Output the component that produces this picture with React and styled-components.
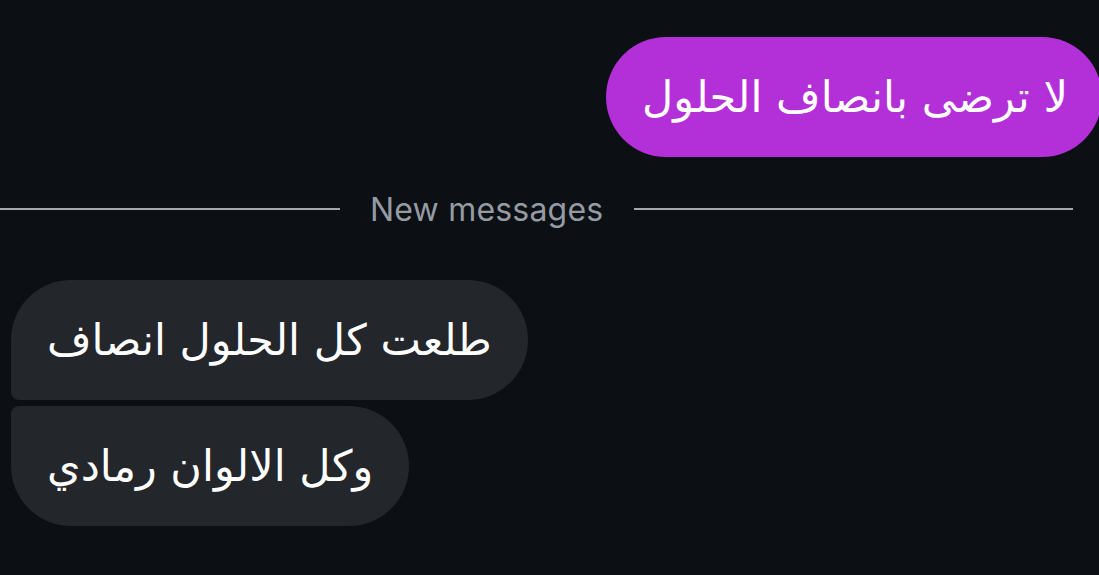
import React from "react";
import styled, { createGlobalStyle } from "styled-components";

const Global = createGlobalStyle`
	html, body {
		margin: 0;
		padding: 0;
		background: #0c0f13;
		overflow: hidden;
	}
`;

function App() {
	return (
		<>
			<Global />
			<Thread>
				<OutRow>
					<OutBubble dir="rtl">لا ترضى بانصاف الحلول</OutBubble>
				</OutRow>
				<Divider>
					<Line lead />
					<DividerText>New messages</DividerText>
					<Line />
				</Divider>
				<InGroup>
					<InBubble dir="rtl" first>طلعت كل الحلول انصاف</InBubble>
					<InBubble dir="rtl" last>وكل الالوان رمادي</InBubble>
				</InGroup>
			</Thread>
		</>
	);
}

export default App;

const Thread = styled.div`
	width: 1099px;
	height: 575px;
	display: flex;
	flex-direction: column;
	padding-top: 37px;
	box-sizing: border-box;
`;

const OutRow = styled.div`
	display: flex;
	justify-content: flex-end;
	margin-right: -3px;
`;

const bubbleText = `
	font-family: "DejaVu Sans", sans-serif;
	font-size: 43px;
	color: #ffffff;
	height: 120px;
	box-sizing: border-box;
	display: flex;
	align-items: center;
`;

const OutBubble = styled.div`
	${bubbleText}
	background: #b330d9;
	border-radius: 60px;
	padding: 0 34px 0 36px;
`;

const Divider = styled.div`
	display: flex;
	align-items: center;
	margin: 37px 26px 0 0;
	height: 30px;
`;

const Line = styled.div`
	flex: ${(p) => (p.lead ? "0 0 340px" : "1")};
	height: 2px;
	background: #a3a8ae;
`;

const DividerText = styled.span`
	font-family: "Inter", "Liberation Sans", sans-serif;
	font-size: 32px;
	letter-spacing: 0.2px;
	color: #959ba3;
	padding: 0 31px 0 30px;
`;

const InGroup = styled.div`
	display: flex;
	flex-direction: column;
	align-items: flex-start;
	gap: 6px;
	margin: 56px 0 0 11px;
`;

const InBubble = styled.div`
	${bubbleText}
	background: #23262b;
	padding: 0 36px;
	border-radius: ${(p) =>
		p.first ? "60px 60px 60px 8px" : p.last ? "8px 60px 60px 60px" : "8px 60px 60px 8px"};
`;
